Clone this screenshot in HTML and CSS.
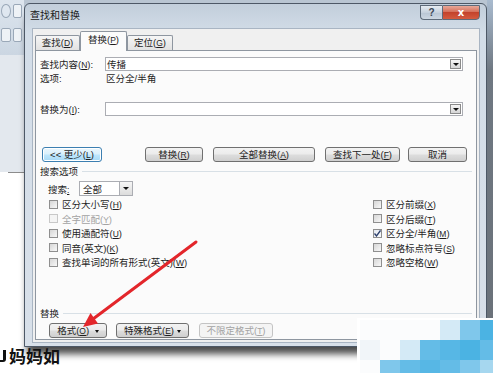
FILE: index.html
```html
<!DOCTYPE html>
<html lang="zh-CN">
<head>
<meta charset="utf-8"/>
<title>查找和替换</title>
<link rel="stylesheet" href="styles.css">
</head>
<body>
<div class="desk">
  <div class="side-left">
    <div class="ribbon">
      <div class="rib-row"><span class="rib-icon round"></span><span class="rib-icon"></span></div>
      <div class="rib-row"><span class="rib-icon"></span><span class="rib-icon"></span></div>
    </div>
    <div class="doc-area"></div>
    <div class="doc-rule"></div>
  </div>

  <div class="window">
    <div class="titlebar">
      <span class="title">查找和替换</span>
      <div class="caption-btns">
        <div class="cap help">?</div>
        <div class="cap close">x</div>
      </div>
    </div>

    <div class="client">
      <div class="tabs">
        <div class="tab t-find">查找(<u>D</u>)</div>
        <div class="tab t-replace active">替换(<u>P</u>)</div>
        <div class="tab t-goto">定位(<u>G</u>)</div>
      </div>

      <div class="panel">
        <div class="row">
          <span class="lbl">查找内容(<u>N</u>):</span>
          <div class="combo"><span>传播</span><span class="combo-btn"><i class="tri"></i></span></div>
        </div>
        <div class="row">
          <span class="lbl wide">选项:</span>
          <span>区分全/半角</span>
        </div>
        <div class="row gap-replace">
          <span class="lbl">替换为(<u>I</u>):</span>
          <div class="combo"><span></span><span class="combo-btn"><i class="tri"></i></span></div>
        </div>

        <div class="btn-row top">
          <div class="btn focus b-less">&lt;&lt; 更少(<u>L</u>)</div>
          <div class="btn b-rep">替换(<u>R</u>)</div>
          <div class="btn b-all">全部替换(<u>A</u>)</div>
          <div class="btn b-next">查找下一处(<u>F</u>)</div>
          <div class="btn b-cancel">取消</div>
        </div>

        <div class="group">搜索选项</div>
        <div class="search-row">
          <span class="lbl-search">搜索<u>:</u></span>
          <div class="select"><span>全部</span><span class="select-btn"><i class="tri"></i></span></div>
        </div>

        <div class="checks">
          <div class="chk"><span class="box"></span><span>区分大小写(<u>H</u>)</span></div>
          <div class="chk disabled"><span class="box"></span><span>全字匹配(<u>Y</u>)</span></div>
          <div class="chk"><span class="box"></span><span>使用通配符(<u>U</u>)</span></div>
          <div class="chk"><span class="box"></span><span>同音(英文)(<u>K</u>)</span></div>
          <div class="chk"><span class="box"></span><span>查找单词的所有形式(英文)(<u>W</u>)</span></div>
          <div class="chk"><span class="box"></span><span>区分前缀(<u>X</u>)</span></div>
          <div class="chk"><span class="box"></span><span>区分后缀(<u>T</u>)</span></div>
          <div class="chk"><span class="box checked"><svg width="7" height="7" viewBox="0 0 7 7"><polyline points="0.5,3.5 2.5,6 6.5,0.5" fill="none" stroke="#2b3e6b" stroke-width="1.3"/></svg></span><span>区分全/半角(<u>M</u>)</span></div>
          <div class="chk"><span class="box"></span><span>忽略标点符号(<u>S</u>)</span></div>
          <div class="chk"><span class="box"></span><span>忽略空格(<u>W</u>)</span></div>
        </div>

        <div class="group g-replace">替换</div>
        <div class="btn-row bottom">
          <div class="btn b-format">格式(<u>O</u>) <i class="tri small"></i></div>
          <div class="btn b-special">特殊格式(<u>E</u>)<i class="tri small"></i></div>
          <div class="btn disabled b-nofmt">不限定格式(<u>T</u>)</div>
        </div>
      </div>
    </div>
  </div>

  <div class="side-right"></div>
</div>

<div class="doc-line"><span class="stub"></span>妈妈如</div>

<svg class="arrow" width="493" height="373" viewBox="0 0 493 373">
  <line x1="196" y1="242" x2="93" y2="319" stroke="#e3262b" stroke-width="3" stroke-linecap="round"/>
  <polygon points="83,327 98,323.5 90.5,313" fill="#e3262b"/>
</svg>

<div class="logo">
  <span class="px w"></span><span class="px w"></span><span class="px w"></span><span class="px w"></span>
  <span class="px c1"></span><span class="px c3"></span><span class="px c6"></span>
  <span class="px c0"></span><span class="px w"></span><span class="px c1"></span><span class="px c4"></span>
  <span class="px c5"></span><span class="px c6"></span><span class="px c4"></span>
  <span class="px w"></span><span class="px c3"></span><span class="px c4"></span><span class="px c5"></span>
  <span class="px c4"></span><span class="px c3"></span><span class="px c2"></span>
</div>
</body>
</html>
```

FILE: styles.css
```css
* { box-sizing: border-box; }
body {
  margin: 0;
  width: 493px;
  height: 373px;
  overflow: hidden;
  position: relative;
  background: #fff;
  font-family: "Liberation Sans", "Noto Sans CJK SC", sans-serif;
  font-size: 9.5px;
  color: #1e1e1e;
  text-autospace: no-autospace;
}
u { text-decoration: underline; font-size: 8.5px; }

/* desktop around the dialog */
.desk { display: flex; height: 347px; background: #b9c5d2; }
.side-left { width: 24px; display: flex; flex-direction: column; background: #fff; }
.ribbon {
  height: 55px;
  background: linear-gradient(#dde5ee, #cbd6e2);
  display: flex; flex-direction: column; gap: 10px;
  padding: 4px 2px 0 1px;
}
.rib-row { display: flex; gap: 2px; height: 14px; }
.rib-icon { width: 10px; height: 14px; border: 1px solid #9aa8b8; border-radius: 2px; background: #eef2f6; }
.rib-icon.round { border-radius: 50%; background: #dfe7f0; }
.doc-area { height: 117px; background: #e3e8ee; }
.doc-rule { height: 1px; margin-left: 8px; background: #8c8c8c; }
.side-right { width: 6px; background: linear-gradient(#a9bbcf, #6f7882 70px, #6a7179); }

/* dialog window */
.window {
  width: 463px;
  height: 344px;
  margin-top: 3px;
  border: 1px solid #4d5866;
  border-radius: 6px 6px 0 0;
  background: linear-gradient(#c2cedb, #d3dde8 30px, #d8e0e9);
  display: flex; flex-direction: column;
  box-shadow: 0 10px 7px -3px rgba(0,0,0,0.7);
}
.titlebar { height: 24px; display: flex; justify-content: space-between; align-items: flex-start; padding-left: 5px; }
.title { font-size: 10px; line-height: 24px; color: #1a1a1a; }
.caption-btns { display: flex; margin: 1px 6px 0 0; }
.cap { height: 15px; border: 1px solid #5e6b7a; text-align: center; font-size: 10px; line-height: 13px; font-weight: 700; }
.cap.help { width: 22px; border-right: none; border-radius: 0 0 0 4px; background: linear-gradient(#e6ecf2, #c6d1dd 50%, #b8c5d3 51%, #cdd7e2); color: #3a4654; }
.cap.close { width: 38px; border-radius: 0 0 4px 0; background: linear-gradient(#e8a899, #d5705a 45%, #c3432c 50%, #d45b3f); color: #fff; font-family: "DejaVu Sans", sans-serif; }

.client {
  flex: 1;
  margin: 0 6px 3px 7px;
  background: #f0f0f0;
  border: 1px solid #a9b5c3;
  padding: 2px;
  display: flex; flex-direction: column;
}

.tabs { display: flex; height: 19px; align-items: flex-end; position: relative; z-index: 1; }
.tab {
  height: 15px;
  border: 1px solid #8e96a0;
  border-bottom: none;
  border-radius: 2px 2px 0 0;
  background: linear-gradient(#f6f6f6, #e2e2e2);
  text-align: center;
  line-height: 13px;
}
.t-find { width: 45px; }
.t-replace { width: 47px; }
.t-goto { width: 46px; }
.tab.active { height: 20px; margin-bottom: -1px; background: #fbfbfb; line-height: 16px; }

.panel {
  flex: 1;
  border: 1px solid #8e96a0;
  background: #fbfbfb;
  padding: 6px 4px 0 4px;
  display: flex; flex-direction: column;
}

.row { display: flex; align-items: center; height: 14px; }
.lbl { width: 65px; }
.lbl.wide { width: 66px; }
.gap-replace { margin-top: 17px; }
.combo {
  width: 358px; height: 14px;
  border: 1px solid #abadb3;
  background: #fff;
  display: flex; justify-content: space-between; align-items: center;
  padding: 0 1px;
}
.combo-btn {
  width: 11px; height: 10px;
  border: 1px solid #8a8a8a;
  background: linear-gradient(#f6f6f6, #d5d5d5);
  display: flex; align-items: center; justify-content: center;
}
.tri {
  display: inline-block; width: 0; height: 0;
  border-left: 3px solid transparent;
  border-right: 3px solid transparent;
  border-top: 3px solid #111;
}
.tri.small { border-left-width: 2.5px; border-right-width: 2.5px; margin-left: 3px; vertical-align: 1px; }

.btn-row { display: flex; height: 15px; }
.btn-row.top { margin-top: 31px; }
.btn-row.bottom { margin-top: 4px; padding-left: 9px; }
.btn {
  height: 15px;
  border: 1px solid #707070;
  border-radius: 3px;
  background: linear-gradient(#f3f3f3, #ebebeb 48%, #dddddd 52%, #cfcfcf);
  text-align: center;
  line-height: 13px;
  white-space: nowrap;
}
.btn.focus { border-color: #3c7fb1; background: linear-gradient(#eaf6fd, #d9f0fc 48%, #bee6fd 52%, #a7d9f5); box-shadow: inset 0 0 0 1px #fff; }
.btn.disabled { border-color: #c4c4c4; background: #f4f4f4; color: #a3a3a3; }
.b-less { width: 60px; margin-left: 2px; }
.b-rep { width: 58px; margin-left: 43px; }
.b-all { width: 102px; margin-left: 10px; }
.b-next { width: 75px; margin-left: 10px; }
.b-cancel { width: 59px; margin-left: 8px; }
.b-format { width: 58px; }
.b-special { width: 73px; margin-left: 9px; }
.b-nofmt { width: 74px; margin-left: 10px; }

.group { display: flex; align-items: center; gap: 4px; height: 12px; margin-top: 3px; }
.group::after { content: ""; flex: 1; height: 1px; background: #d8e0e6; }
.group.g-replace { margin-top: 37.5px; }

.search-row { display: flex; align-items: center; height: 15px; margin-top: 4px; padding-left: 8px; }
.lbl-search { width: 31px; }
.select {
  width: 54px; height: 15px;
  border: 1px solid #abadb3;
  background: #fff;
  display: flex; justify-content: space-between; align-items: center;
  padding-left: 3px;
}
.select-btn {
  width: 13px; height: 13px;
  border-left: 1px solid #abadb3;
  background: linear-gradient(#f6f6f6, #dcdcdc);
  display: flex; align-items: center; justify-content: center;
}

.checks {
  display: grid;
  grid-template-columns: 324px 1fr;
  grid-template-rows: repeat(5, 14.5px);
  grid-auto-flow: column;
  margin-top: 1px;
  padding-left: 9px;
}
.chk { display: flex; align-items: center; gap: 4px; }
.box {
  width: 9px; height: 9px;
  border: 1px solid #8f8f8f;
  background: linear-gradient(135deg, #d6d6d6, #f8f8f8);
  display: flex; align-items: center; justify-content: center;
}
.box.checked { background: linear-gradient(135deg, #e4e8ef, #fafbfc); }
.chk.disabled { color: #a3a3a3; }
.chk.disabled .box { border-color: #c8c8c8; background: #f4f4f4; }

/* document text peeking below the dialog */
.doc-line {
  display: flex; align-items: center;
  font-family: "Noto Sans CJK SC", sans-serif;
  font-weight: 700;
  font-size: 17px;
  line-height: 17px;
  color: #111;
}
.stub { width: 6px; height: 12px; margin: 0 3px 0 0; border-right: 3px solid #111; border-bottom: 2px solid #111; border-radius: 0 0 3px 0; }

/* overlays */
.arrow { position: absolute; left: 0; top: 0; pointer-events: none; }
.logo {
  position: absolute;
  left: 357px; top: 318px;
  width: 136px; height: 55px;
  overflow: hidden;
  background: #fff;
  padding: 2px 0 0 3px;
  display: grid;
  grid-template-columns: repeat(7, 20px);
  grid-template-rows: repeat(3, 20px);
}
.px.w { background: #fbfcfd; }
.px.c0 { background: #f1f5f9; }
.px.c1 { background: #d4eaf6; }
.px.c2 { background: #a6d7ef; }
.px.c3 { background: #7fc7eb; }
.px.c4 { background: #64bce7; }
.px.c5 { background: #57b7e5; }
.px.c6 { background: #4bb3e3; }
```
